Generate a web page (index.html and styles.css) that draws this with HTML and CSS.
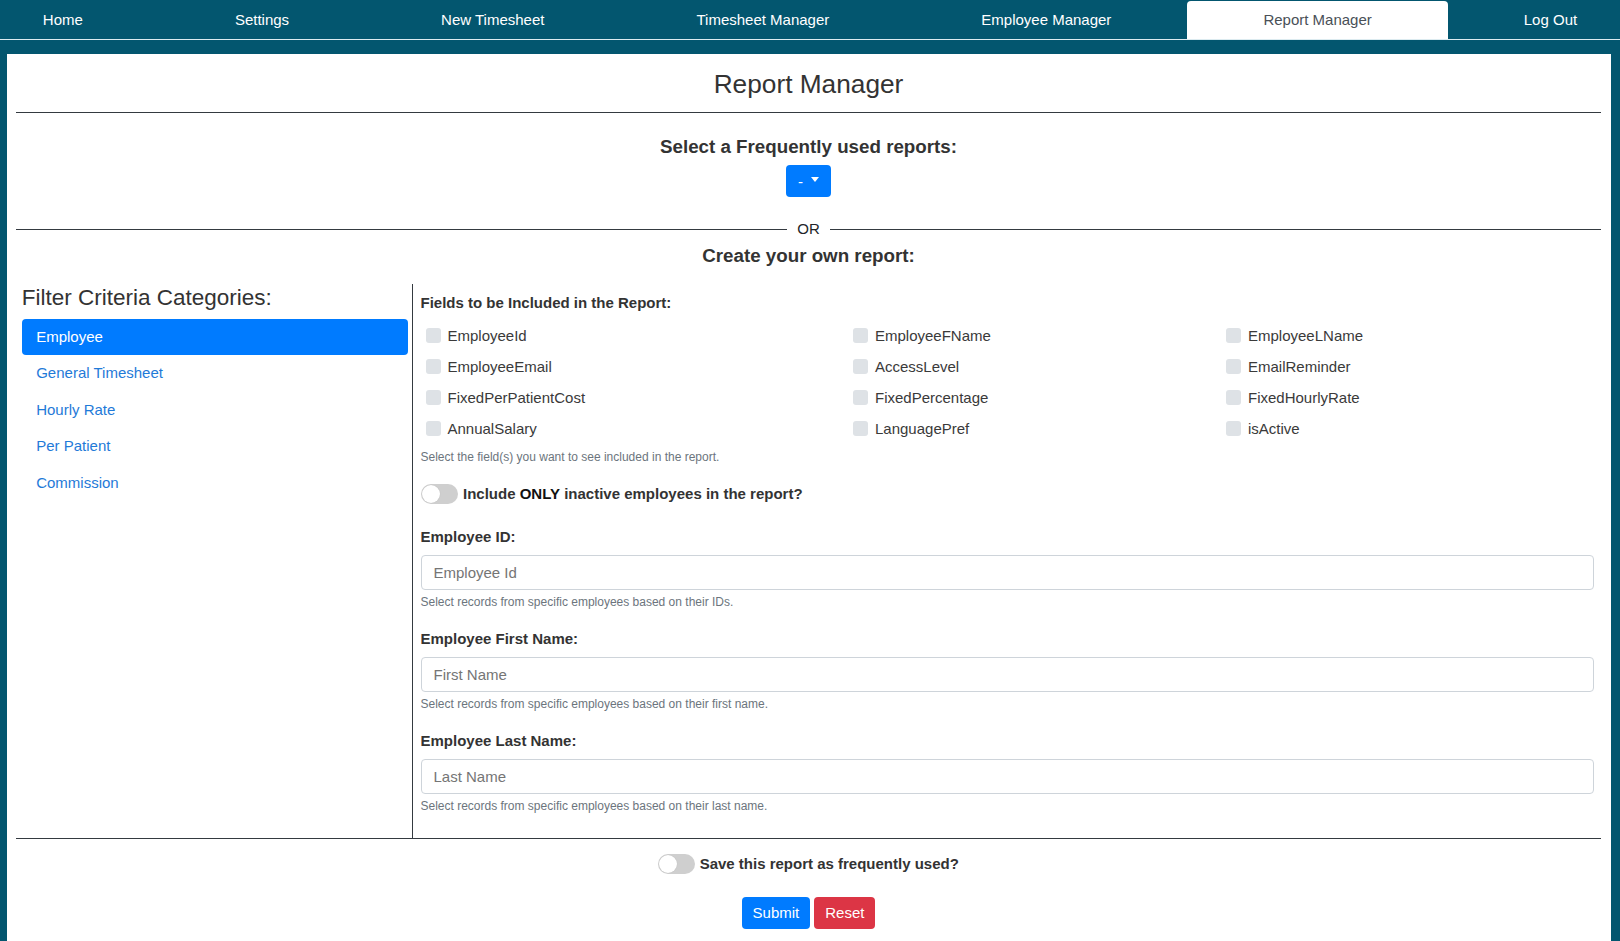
FILE: index.html
```html
<!DOCTYPE html>
<html lang="en">
<head>
<meta charset="utf-8">
<title>Report Manager</title>
<link rel="stylesheet" href="styles.css">
</head>
<body>
<nav class="topnav">
  <a class="tab" href="#">Home</a>
  <a class="tab" href="#">Settings</a>
  <a class="tab" href="#">New Timesheet</a>
  <a class="tab" href="#">Timesheet Manager</a>
  <a class="tab" href="#">Employee Manager</a>
  <a class="tab active" href="#">Report Manager</a>
  <a class="tab" href="#">Log Out</a>
</nav>

<main class="card">
  <h3 class="page-title">Report Manager</h3>
  <hr class="rule">

  <section class="frequent">
    <h5 class="section-heading">Select a Frequently used reports:</h5>
    <button class="btn btn-primary dropdown-btn" type="button"><span>-</span><span class="caret"></span></button>
  </section>

  <div class="or-divider"><span class="or-line"></span><span class="or-text">OR</span><span class="or-line"></span></div>
  <h5 class="section-heading create">Create your own report:</h5>

  <div class="builder">
    <aside class="categories">
      <h4 class="categories-title">Filter Criteria Categories:</h4>
      <ul class="category-list">
        <li><a class="category-link active" href="#">Employee</a></li>
        <li><a class="category-link" href="#">General Timesheet</a></li>
        <li><a class="category-link" href="#">Hourly Rate</a></li>
        <li><a class="category-link" href="#">Per Patient</a></li>
        <li><a class="category-link" href="#">Commission</a></li>
      </ul>
    </aside>

    <section class="criteria">
      <div class="field-label">Fields to be Included in the Report:</div>
      <div class="field-grid">
        <label class="check"><span class="check-box"></span>EmployeeId</label>
        <label class="check"><span class="check-box"></span>EmployeeFName</label>
        <label class="check"><span class="check-box"></span>EmployeeLName</label>
        <label class="check"><span class="check-box"></span>EmployeeEmail</label>
        <label class="check"><span class="check-box"></span>AccessLevel</label>
        <label class="check"><span class="check-box"></span>EmailReminder</label>
        <label class="check"><span class="check-box"></span>FixedPerPatientCost</label>
        <label class="check"><span class="check-box"></span>FixedPercentage</label>
        <label class="check"><span class="check-box"></span>FixedHourlyRate</label>
        <label class="check"><span class="check-box"></span>AnnualSalary</label>
        <label class="check"><span class="check-box"></span>LanguagePref</label>
        <label class="check"><span class="check-box"></span>isActive</label>
      </div>
      <small class="help help-fields">Select the field(s) you want to see included in the report.</small>

      <label class="switch-row"><span class="switch"></span><span>Include <strong class="strong">ONLY</strong> inactive employees in the report?</span></label>

      <div class="form-group first">
        <div class="field-label">Employee ID:</div>
        <input class="text-input" type="text" placeholder="Employee Id">
        <small class="help">Select records from specific employees based on their IDs.</small>
      </div>
      <div class="form-group">
        <div class="field-label">Employee First Name:</div>
        <input class="text-input" type="text" placeholder="First Name">
        <small class="help">Select records from specific employees based on their first name.</small>
      </div>
      <div class="form-group">
        <div class="field-label">Employee Last Name:</div>
        <input class="text-input" type="text" placeholder="Last Name">
        <small class="help">Select records from specific employees based on their last name.</small>
      </div>
    </section>
  </div>

  <hr class="rule rule-bottom">

  <label class="save-row"><span class="switch"></span><span>Save this report as frequently used?</span></label>

  <div class="actions">
    <button class="btn btn-primary" type="button">Submit</button>
    <button class="btn btn-danger" type="button">Reset</button>
  </div>
</main>
</body>
</html>
```

FILE: styles.css
```css
html, body {
  margin: 0;
}

body {
  background: #03566f;
  font-family: "Liberation Sans", Arial, sans-serif;
  font-size: 15px;
  color: #333;
}

/* ---------- top navigation ---------- */
.topnav {
  display: flex;
  justify-content: center;
  overflow: hidden;
  height: 38px;
  padding-top: 1px;
  border-bottom: 1px solid #dcebf0;
}

.tab {
  flex: 0 0 auto;
  padding: 0 76px;
  line-height: 38px;
  color: #fff;
  text-decoration: none;
  white-space: nowrap;
  border-radius: 4px 4px 0 0;
}

.tab.active {
  background: #fff;
  color: #495057;
}

/* ---------- card ---------- */
.card {
  background: #fff;
  margin: 14px 9px 0 7px;
  padding: 15px 10px 40px 9px;
}

.page-title {
  margin: 0;
  font-size: 26.25px;
  line-height: 31.5px;
  font-weight: normal;
  text-align: center;
  color: #333;
}

.rule {
  margin: 11px 0 0;
  border: 0;
  border-top: 1px solid #343a40;
}

.rule-bottom {
  margin-top: 0;
}

.frequent {
  text-align: center;
  margin-top: 23px;
}

.section-heading {
  margin: 0;
  font-size: 18.75px;
  line-height: 22.5px;
  font-weight: bold;
  text-align: center;
  color: #333;
}

.btn {
  height: 32px;
  padding: 0 11px;
  border: 0;
  border-radius: 4px;
  color: #fff;
  font-family: "Liberation Sans", Arial, sans-serif;
  font-size: 15px;
  cursor: pointer;
}

.btn-primary {
  background: #007bff;
}

.btn-danger {
  background: #dc3545;
}

.dropdown-btn {
  display: inline-flex;
  align-items: center;
  justify-content: center;
  gap: 8px;
  width: 45px;
  padding: 0;
  margin-top: 7px;
}

.caret {
  width: 0;
  height: 0;
  border-top: 5px solid #fff;
  border-left: 4px solid transparent;
  border-right: 4px solid transparent;
  margin-top: -3px;
}

.or-divider {
  display: flex;
  align-items: center;
  margin-top: 23px;
}

.or-line {
  flex: 1;
  border-top: 1px solid #343a40;
}

.or-text {
  margin: 0 10px;
  line-height: 18px;
  color: #212529;
}

.create {
  margin-top: 7px;
}

/* ---------- builder ---------- */
.builder {
  display: flex;
  margin-top: 16px;
}

.categories {
  box-sizing: border-box;
  width: 397px;
  flex: none;
  padding: 0 4px 0 5.7px;
  border-right: 1px solid #343a40;
}

.categories-title {
  margin: 0;
  font-size: 22.5px;
  line-height: 27px;
  font-weight: normal;
  color: #333;
}

.category-list {
  list-style: none;
  margin: 8px 0 0;
  padding: 0;
}

.category-link {
  display: block;
  padding: 7px 14.5px;
  line-height: 22.5px;
  color: #1f7ad8;
  text-decoration: none;
  border-radius: 4px;
}

.category-link.active {
  background: #007bff;
  color: #fff;
}

.criteria {
  flex: 1;
  min-width: 0;
  padding: 10px 7px 25px 7.5px;
}

.field-label {
  font-weight: bold;
  line-height: 18px;
  color: #333;
}

.field-grid {
  display: grid;
  grid-template-columns: 427.5px 373px 1fr;
  margin-top: 8.5px;
}

.check {
  display: flex;
  align-items: center;
  gap: 7px;
  height: 31px;
  padding-left: 5px;
  color: #3a3a3a;
}

.check-box {
  flex: none;
  width: 15px;
  height: 15px;
  border-radius: 3px;
  background: #dee2e6;
}

.help {
  display: block;
  font-size: 12px;
  line-height: 14px;
  color: #6c757d;
  margin-top: 5px;
}

.help-fields {
  margin-top: 5.5px;
}

.switch-row,
.save-row {
  display: flex;
  align-items: center;
  font-weight: bold;
  line-height: 20px;
  color: #333;
}

.switch-row {
  gap: 5.5px;
  margin-top: 20px;
}

.strong {
  color: #111;
}

.switch {
  position: relative;
  flex: none;
  width: 37px;
  height: 20px;
  border-radius: 10px;
  background: #cfcfcf;
}

.switch::after {
  content: "";
  position: absolute;
  left: 1px;
  top: 1px;
  width: 18px;
  height: 18px;
  border-radius: 50%;
  background: #fff;
  box-shadow: 0 0 1px rgba(0, 0, 0, 0.15);
}

.form-group {
  margin-top: 20.5px;
}

.form-group.first {
  margin-top: 24px;
}

.text-input {
  display: block;
  box-sizing: border-box;
  width: 100%;
  height: 35px;
  margin-top: 9.5px;
  padding: 0 12px;
  border: 1px solid #ced4da;
  border-radius: 4px;
  font-family: "Liberation Sans", Arial, sans-serif;
  font-size: 15px;
  color: #495057;
  background: #fff;
}

.text-input::placeholder {
  color: #757575;
}

/* ---------- footer of card ---------- */
.save-row {
  justify-content: center;
  gap: 4.5px;
  margin-top: 15px;
}

.actions {
  display: flex;
  justify-content: center;
  gap: 4px;
  margin-top: 22.5px;
}
```
